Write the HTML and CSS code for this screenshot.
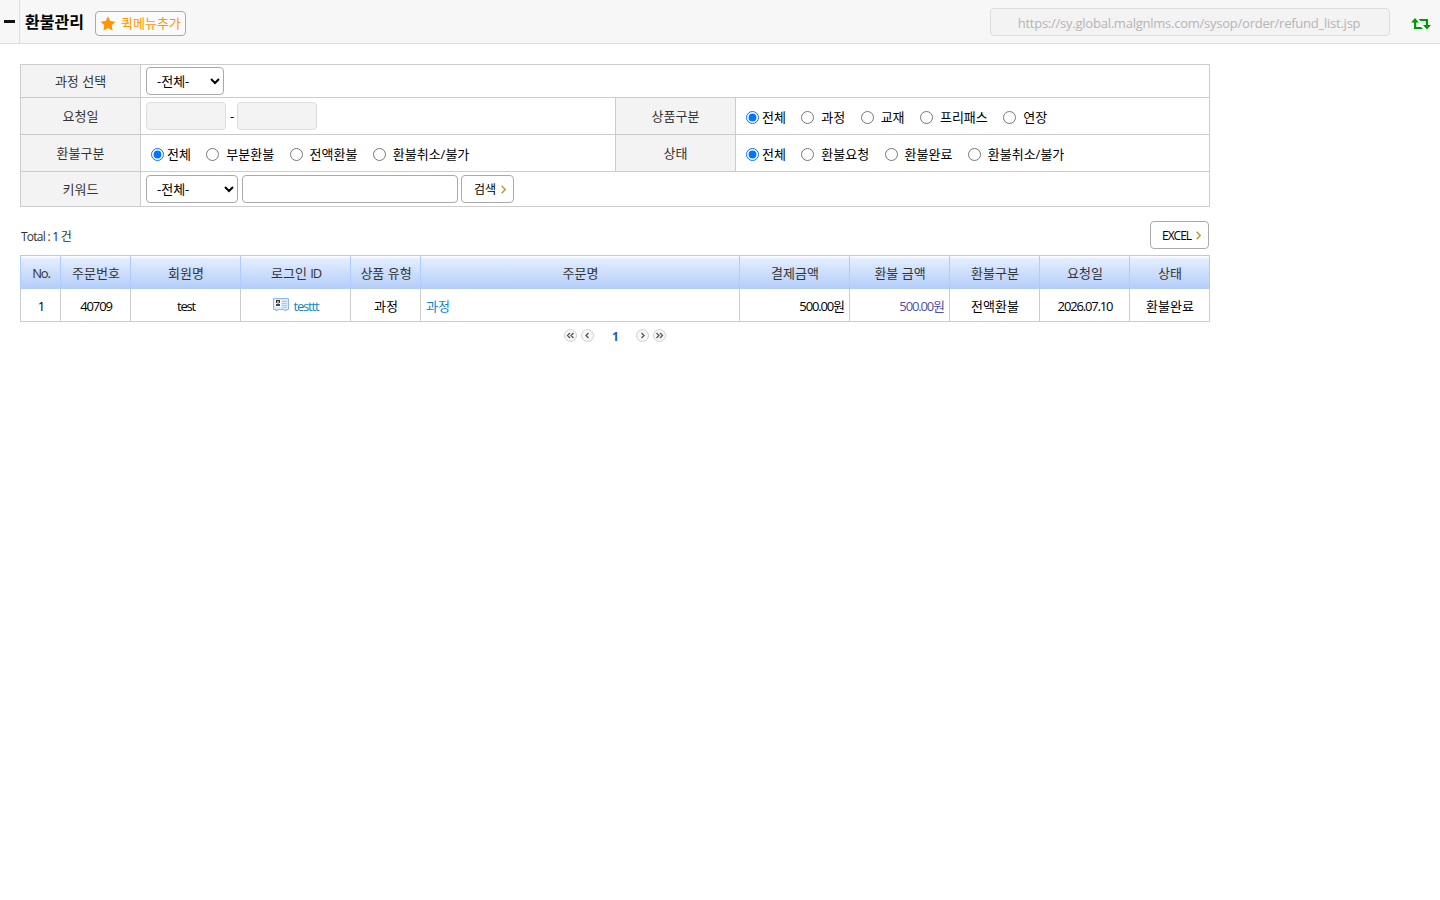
FILE: index.html
```html
<!DOCTYPE html>
<html lang="ko">
<head>
  <meta charset="UTF-8">
  <title>환불관리</title>
  <link rel="stylesheet" href="styles.css">
</head>
<body>
  <div class="topbar">
    <button type="button" class="fold-btn" aria-label="menu"><span class="fold-bar"></span></button>
    <h1>환불관리</h1>
    <button type="button" class="quick-btn">
      <svg width="16" height="15" viewBox="0 0 16 15"><path fill="#ff9600" d="M8 .4l2.3 4.6 5.1.7-3.7 3.6.9 5.1L8 12l-4.6 2.4.9-5.1L.6 5.7l5.1-.7z"/></svg>
      <span>퀵메뉴추가</span>
    </button>
    <div class="url-box">https://sy.global.malgnlms.com/sysop/order/refund_list.jsp</div>
    <svg class="refresh" width="20" height="14" viewBox="0 0 20 14"><path fill="#090" d="M4 1l4 4.500H5.200V10H10l2 2H3V5.500H0zM7.500 2H17v6h3l-4 4.500L12 8h2.800V4H9.500z"/></svg>
  </div>

  <div class="content">
    <form name="form1">
      <table class="search-table">
        <colgroup><col class="c-th"><col class="c-td"><col class="c-th"><col class="c-td2"></colgroup>
        <tr class="row-first">
          <th>과정 선택</th>
          <td colspan="3"><div class="field"><select class="sel-course"><option>-전체-</option></select></div></td>
        </tr>
        <tr class="row-mid">
          <th>요청일</th>
          <td><div class="field"><input type="text" class="date" disabled><span class="dash">-</span><input type="text" class="date" disabled></div></td>
          <th>상품구분</th>
          <td>
            <div class="radios">
              <label><input type="radio" name="type" checked>전체</label>
              <label><input type="radio" name="type">과정</label>
              <label><input type="radio" name="type">교재</label>
              <label><input type="radio" name="type">프리패스</label>
              <label><input type="radio" name="type">연장</label>
            </div>
          </td>
        </tr>
        <tr class="row-mid">
          <th>환불구분</th>
          <td>
            <div class="radios">
              <label><input type="radio" name="refund" checked>전체</label>
              <label><input type="radio" name="refund">부분환불</label>
              <label><input type="radio" name="refund">전액환불</label>
              <label><input type="radio" name="refund">환불취소/불가</label>
            </div>
          </td>
          <th>상태</th>
          <td>
            <div class="radios">
              <label><input type="radio" name="status" checked>전체</label>
              <label><input type="radio" name="status">환불요청</label>
              <label><input type="radio" name="status">환불완료</label>
              <label><input type="radio" name="status">환불취소/불가</label>
            </div>
          </td>
        </tr>
        <tr class="row-last">
          <th>키워드</th>
          <td colspan="3">
            <div class="field">
              <select class="sel-key"><option>-전체-</option></select>
              <input type="text" class="keyword">
              <button type="button" class="btn btn-search"><span>검색</span><svg width="5" height="9" viewBox="0 0 5 9"><path d="M.7.8l3.500 3.700L.7 8.200"/></svg></button>
            </div>
          </td>
        </tr>
      </table>
    </form>

    <div class="list-top">
      <div class="total">Total : <b>1</b> 건</div>
      <button type="button" class="btn btn-excel"><span class="en">EXCEL</span><svg width="5" height="9" viewBox="0 0 5 9"><path d="M.7.8l3.500 3.700L.7 8.200"/></svg></button>
    </div>

    <table class="list-table">
      <colgroup>
        <col class="w40"><col class="w70"><col class="w110"><col class="w110"><col class="w70"><col class="w319">
        <col class="w110"><col class="w100"><col class="w90"><col class="w90"><col class="w80">
      </colgroup>
      <thead>
        <tr>
          <th><span class="en">No.</span></th>
          <th>주문번호</th>
          <th>회원명</th>
          <th>로그인 <span class="en">ID</span></th>
          <th>상품 유형</th>
          <th>주문명</th>
          <th>결제금액</th>
          <th>환불 금액</th>
          <th>환불구분</th>
          <th>요청일</th>
          <th>상태</th>
        </tr>
      </thead>
      <tbody>
        <tr>
          <td><span class="en">1</span></td>
          <td><span class="en">40709</span></td>
          <td><span class="en">test</span></td>
          <td>
            <a class="member">
              <svg width="16" height="13" viewBox="0 0 16 13">
                <path fill="#dcecfc" stroke="#8fb9e6" d="M.5.5h15v11h-2v1h-2v-1h-7v1h-2v-1h-2z"/>
                <path fill="#fff" d="M2 2h6v7H2z"/>
                <path fill="#3d2a20" d="M3 2h4v3H3z"/>
                <path fill="#f0a35c" d="M4 3h2v3H4z"/>
                <path fill="#334a68" d="M3 6h4v2H3z"/>
                <path stroke="#a9c8ea" d="M9 3.500h5M9 5.500h5M9 7.500h5M9 9.500h5"/>
              </svg>
              <span class="en">testtt</span>
            </a>
          </td>
          <td>과정</td>
          <td class="left"><a>과정</a></td>
          <td class="right"><span class="en">500.00</span>원</td>
          <td class="right refund"><span class="en">500.00</span>원</td>
          <td>전액환불</td>
          <td><span class="en">2026.07.10</span></td>
          <td>환불완료</td>
        </tr>
      </tbody>
    </table>

    <div class="paging">
      <svg class="pg" viewBox="0 0 13 13"><circle cx="6.500" cy="6.500" r="6"/><path d="M6 4L3.500 6.500 6 9M9.500 4L7 6.500 9.500 9"/></svg>
      <svg class="pg" viewBox="0 0 13 13"><circle cx="6.500" cy="6.500" r="6"/><path d="M7.500 4L5 6.500 7.500 9"/></svg>
      <strong>1</strong>
      <svg class="pg" viewBox="0 0 13 13"><circle cx="6.500" cy="6.500" r="6"/><path d="M5.500 4L8 6.500 5.500 9"/></svg>
      <svg class="pg" viewBox="0 0 13 13"><circle cx="6.500" cy="6.500" r="6"/><path d="M3.500 4L6 6.500 3.500 9M7 4l2.500 2.500L7 9"/></svg>
    </div>
  </div>
</body>
</html>
```
FILE: styles.css
```css
* {
  box-sizing: border-box;
}

body {
  margin: 0;
  background: #fff;
  color: #000;
  font: 13px/18px "Open Sans", "Noto Sans CJK KR", sans-serif;
}

input, select, button {
  font: inherit;
  color: #000;
  margin: 0;
}

svg {
  display: block;
  flex: none;
}

.en {
  letter-spacing: -1.15px;
}

/* top bar */
.topbar {
  display: flex;
  align-items: center;
  height: 44px;
  padding-right: 9px;
  background: #f7f7f7;
  border-bottom: 1px solid #ddd;
}

.fold-btn {
  align-self: stretch;
  width: 20px;
  padding: 0 0 0 4px;
  border: 0;
  border-right: 1px solid #ddd;
  background: none;
}

.fold-bar {
  display: block;
  width: 11px;
  height: 3px;
  background: #111;
}

h1 {
  margin: 0 10px 0 5px;
  font-size: 16px;
  font-weight: 600;
  line-height: 22px;
  white-space: nowrap;
  width: 60px;
}

.quick-btn {
  display: flex;
  align-items: center;
  gap: 5px;
  width: 91px;
  height: 25px;
  margin-top: 3px;
  padding: 0 0 0 4px;
  border: 1px solid #aaa;
  border-radius: 4px;
  background: #fafafa;
  color: #ff9600;
  white-space: nowrap;
}

.url-box {
  width: 400px;
  height: 28px;
  margin-left: auto;
  border: 1px solid #ddd;
  border-radius: 4px;
  background: #f3f3f3;
  color: #b5b5b5;
  line-height: 28px;
  letter-spacing: -0.24px;
  padding-right: 2px;
  text-align: center;
}

.refresh {
  margin: 4px 0 0 21px;
}

.content {
  width: 1190px;
  margin: 20px 0 0 20px;
}

table {
  width: 1190px;
  border-collapse: collapse;
  table-layout: fixed;
}

th, td {
  padding: 0;
  border: 1px solid #ccc;
}

th {
  font-weight: 400;
  color: #333;
  text-align: center;
}

/* search form */
.c-th { width: 120px; }
.c-td { width: 475px; }
.c-td2 { width: 474px; }

.search-table th {
  background: #f3f3f3;
}

.search-table td {
  padding-left: 5px;
}

.row-first { height: 33px; }
.row-mid { height: 37px; }
.row-last { height: 35px; }

.field {
  display: flex;
  align-items: center;
}

.field select,
.field input {
  height: 28px;
  border: 1px solid #aaa;
  border-radius: 4px;
  background: #fff;
}

.field select {
  padding: 0 0 0 6px;
}

.sel-course { width: 78px; }
.sel-key { width: 92px; }

.field .date {
  width: 80px;
  border-color: #ddd;
  background: #f3f3f3;
}

.dash {
  width: 11px;
  padding-left: 1px;
  text-align: center;
}

.field .keyword {
  width: 216px;
  margin: 0 3px 0 4px;
}

.btn {
  display: flex;
  align-items: center;
  height: 28px;
  padding: 1px 7px 0 12px;
  border: 1px solid #aaa;
  border-radius: 4px;
  background: #fff;
  font-size: 12px;
  justify-content: space-between;
}

.btn path {
  fill: none;
  stroke: #b99a2c;
  stroke-width: 1.4;
}

.btn-search { width: 53px; }

.btn-excel {
  width: 59px;
  padding-left: 11px;
}

.btn-excel .en {
  letter-spacing: -1px;
}

.radios {
  display: flex;
  gap: 15.4px;
  padding: 1px 0 0 5px;
}

.radios label {
  display: flex;
  align-items: center;
  gap: 7px;
  white-space: nowrap;
}

.radios label:first-child {
  gap: 3px;
}

.radios input {
  width: 13px;
  height: 13px;
  margin-top: 1px;
}

/* list */
.list-top {
  display: flex;
  justify-content: space-between;
  align-items: center;
  height: 28px;
  margin: 14px 0 6px;
  padding: 0 1px;
}

.total {
  padding-top: 3px;
  font-size: 12px;
  letter-spacing: -0.75px;
  color: #333;
}

.total b {
  font-weight: 400;
  color: #00f;
}

.w40 { width: 40px; }
.w70 { width: 70px; }
.w80 { width: 80px; }
.w90 { width: 90px; }
.w100 { width: 100px; }
.w110 { width: 110px; }
.w319 { width: 319px; }

.list-table thead tr {
  height: 33px;
  background: linear-gradient(#fff 0, #e2edff 3px, #b3cdf8 33px);
}

.list-table th {
  padding: 1px 0 0 1px;
  border-color: #b0ccff;
  border-bottom: 0;
}

.list-table tbody tr {
  height: 33px;
}

.list-table td {
  padding: 2px 0 0 1px;
  text-align: center;
  border-top: 0;
}

.list-table .left {
  padding-left: 5px;
  text-align: left;
}

.list-table .right {
  padding-right: 4px;
  text-align: right;
}

.list-table .refund {
  color: #5050a8;
}

.list-table a {
  color: #0b87d0;
}

.member {
  display: flex;
  justify-content: center;
  align-items: center;
  gap: 4px;
}

.member svg {
  margin-bottom: 2px;
}

.paging {
  display: flex;
  justify-content: center;
  align-items: center;
  gap: 4px;
  height: 18px;
  margin-top: 5px;
}

.paging strong {
  width: 34px;
  padding: 1px 0 0 1px;
  font-size: 12px;
  color: #1560bd;
  text-align: center;
}

.pg {
  width: 13px;
  height: 13px;
  margin-bottom: 2px;
}

.pg circle {
  fill: #f6f6f6;
  stroke: #d0d0d0;
}

.pg path {
  fill: none;
  stroke: #555;
  stroke-width: 1.3;
}
```
